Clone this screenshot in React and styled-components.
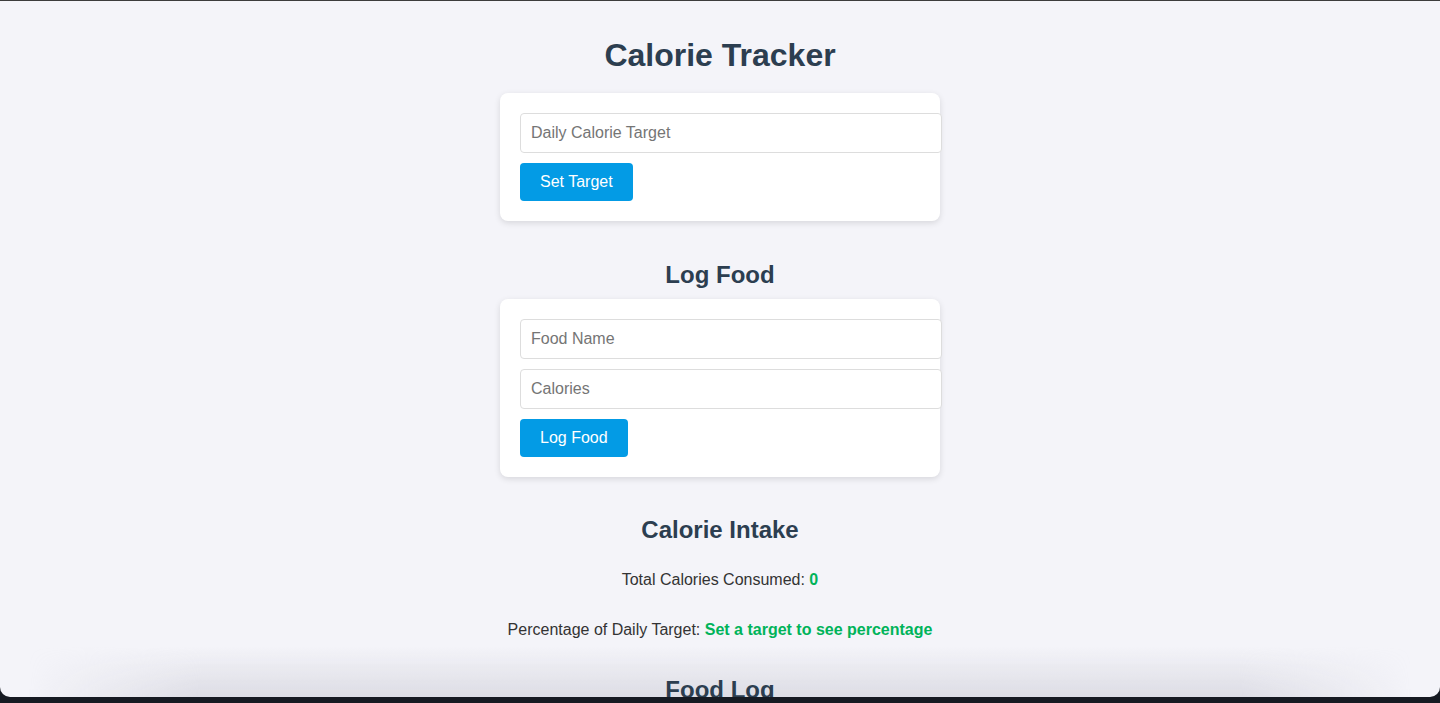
import React, { useState } from "react";
import styled, { createGlobalStyle } from "styled-components";

const GlobalStyle = createGlobalStyle`
  html, body {
    margin: 0;
    padding: 0;
    background: #161a22;
  }
  * {
    font-family: "Liberation Sans", Arial, sans-serif;
  }
`;

const Screen = styled.div`
  height: 703px;
  display: flex;
  flex-direction: column;
  overflow: hidden;
`;

const Window = styled.main`
  position: relative;
  height: 697px;
  box-sizing: border-box;
  border-top: 1px solid #3c3c3c;
  background: #f4f4f9;
  border-radius: 0 0 10px 10px;
  overflow: hidden;
  padding-top: 36px;
  text-align: center;
  color: #333;

  &::before {
    content: "";
    position: absolute;
    left: 0;
    right: 0;
    bottom: 0;
    height: 50px;
    background: linear-gradient(to bottom, rgba(205, 205, 215, 0), rgba(205, 205, 215, 0.6));
    -webkit-mask-image: linear-gradient(to right, transparent 2%, #000 14%, #000 86%, transparent 98%);
    mask-image: linear-gradient(to right, transparent 2%, #000 14%, #000 86%, transparent 98%);
    pointer-events: none;
  }
`;

const Title = styled.h1`
  position: relative;
  margin: 0;
  font-size: 32px;
  font-weight: bold;
  color: #2c3e50;
`;

const SectionTitle = styled.h2`
  position: relative;
  margin: ${(p) => p.$top}px 0 ${(p) => p.$bottom}px;
  font-size: 24px;
  font-weight: bold;
  color: #2c3e50;
`;

const Card = styled.form`
  width: 400px;
  margin: ${(p) => p.$top}px auto 0;
  padding: 20px;
  background: #fff;
  border-radius: 8px;
  box-shadow: 0 2px 6px rgba(0, 0, 0, 0.12);
  text-align: left;
`;

const Input = styled.input`
  display: block;
  width: 100%;
  padding: 10px;
  margin: 0 0 10px;
  font-size: 16px;
  line-height: 18px;
  color: #333;
  border: 1px solid #ddd;
  border-radius: 4px;
  background: #fff;

  &::placeholder {
    color: #757575;
  }
`;

const Button = styled.button`
  padding: 10px 20px;
  font-size: 16px;
  line-height: 18px;
  color: #fff;
  background: #039be5;
  border: none;
  border-radius: 4px;
  cursor: pointer;
`;

const Stat = styled.p`
  position: relative;
  margin: ${(p) => p.$top}px 0 0;
  font-size: 16px;
  line-height: 18px;
  color: #333;
`;

const Value = styled.span`
  font-weight: bold;
  color: #00b35a;
`;

const Dock = styled.div`
  flex: 1;
  background: #161a22;
`;

export default function App() {
  const [target, setTarget] = useState("");
  const [goal, setGoal] = useState(null);
  const [foodName, setFoodName] = useState("");
  const [calories, setCalories] = useState("");
  const [log, setLog] = useState([]);

  const total = log.reduce((sum, item) => sum + item.calories, 0);

  const handleTarget = (e) => {
    e.preventDefault();
    const n = parseInt(target, 10);
    if (n > 0) setGoal(n);
  };

  const handleLog = (e) => {
    e.preventDefault();
    const n = parseInt(calories, 10);
    if (!foodName || !n) return;
    setLog([...log, { name: foodName, calories: n }]);
    setFoodName("");
    setCalories("");
  };

  return (
    <Screen>
      <GlobalStyle />
      <Window>
        <Title>Calorie Tracker</Title>

        <Card $top={19} onSubmit={handleTarget}>
          <Input
            type="number"
            placeholder="Daily Calorie Target"
            value={target}
            onChange={(e) => setTarget(e.target.value)}
          />
          <Button type="submit">Set Target</Button>
        </Card>

        <SectionTitle $top={40} $bottom={10}>Log Food</SectionTitle>
        <Card $top={0} onSubmit={handleLog}>
          <Input
            type="text"
            placeholder="Food Name"
            value={foodName}
            onChange={(e) => setFoodName(e.target.value)}
          />
          <Input
            type="number"
            placeholder="Calories"
            value={calories}
            onChange={(e) => setCalories(e.target.value)}
          />
          <Button type="submit">Log Food</Button>
        </Card>

        <SectionTitle $top={39} $bottom={0}>Calorie Intake</SectionTitle>
        <Stat $top={27}>
          Total Calories Consumed: <Value>{total}</Value>
        </Stat>
        <Stat $top={32}>
          Percentage of Daily Target:{" "}
          <Value>
            {goal ? `${Math.round((total / goal) * 100)}%` : "Set a target to see percentage"}
          </Value>
        </Stat>

        <SectionTitle $top={37} $bottom={0}>Food Log</SectionTitle>
      </Window>
      <Dock />
    </Screen>
  );
}
